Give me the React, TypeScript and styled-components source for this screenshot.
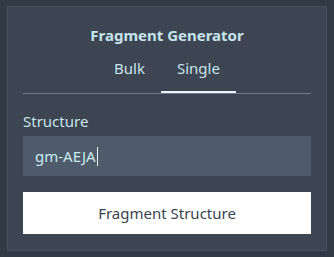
import React, { useEffect, useState } from "react";
import styled, { createGlobalStyle } from "styled-components";

const FONT = `"Noto Sans", "DejaVu Sans", sans-serif`;

const Global = createGlobalStyle`
  html, body { margin: 0; padding: 0; }
  body {
    background: #323a46;
    font-family: ${FONT};
    width: 334px;
    height: 257px;
    overflow: hidden;
  }
`;

const Page = styled.div`
  padding: 6px 7px;
  box-sizing: border-box;
  width: 334px;
  height: 257px;
`;

const Panel = styled.div`
  box-sizing: border-box;
  width: 320px;
  height: 245px;
  background: #3c4551;
  border: 1px solid #485160;
  padding: 0 15px;
  display: flex;
  flex-direction: column;
`;

const Title = styled.h2`
  margin: 17px 0 0;
  text-align: center;
  font-size: 15px;
  font-weight: 700;
  line-height: 22px;
  color: #c6e4ec;
`;

const Tabs = styled.div`
  margin-top: 11px;
  display: flex;
  justify-content: center;
  border-bottom: 1px solid #6b7a8f;
`;

const Tab = styled.button<{ $active?: boolean }>`
  background: none;
  border: none;
  margin: 0;
  padding: 0 16px 12px;
  font-family: inherit;
  font-size: 15px;
  line-height: 22px;
  color: #c6e4ec;
  cursor: pointer;
  border-bottom: 2px solid ${(p) => (p.$active ? "#eef2f6" : "transparent")};
`;

const Label = styled.label`
  display: block;
  margin-top: 17px;
  font-size: 15px;
  line-height: 20px;
  color: #c6e4ec;
`;

const Field = styled.div`
  position: relative;
  margin-top: 5px;
`;

const Input = styled.input`
  box-sizing: border-box;
  display: block;
  width: 100%;
  height: 40px;
  background: #4f5a6a;
  border: none;
  outline: none;
  padding: 0 12px;
  font-family: inherit;
  font-size: 15px;
  color: #c6ecf0;
  caret-color: transparent;
`;

const Caret = styled.span`
  position: absolute;
  top: 11px;
  width: 1px;
  height: 19px;
  background: #e8f4f6;
  pointer-events: none;
`;

const Button = styled.button`
  box-sizing: border-box;
  margin-top: 16px;
  width: 100%;
  height: 42px;
  background: #ffffff;
  border: none;
  font-family: inherit;
  font-size: 15px;
  color: #3a4350;
  cursor: pointer;
`;

function measure(text: string): number {
  if (typeof document === "undefined") return text.length * 9;
  const c = document.createElement("canvas");
  const ctx = c.getContext("2d");
  if (!ctx) return text.length * 9;
  ctx.font = `15px ${FONT}`;
  return ctx.measureText(text).width;
}

export default function App() {
  const [tab, setTab] = useState("single");
  const [value, setValue] = useState("gm-AEJA");
  const [caretX, setCaretX] = useState(12 + measure("gm-AEJA"));

  useEffect(() => {
    const update = () => setCaretX(12 + measure(value));
    update();
    if ((document as any).fonts?.ready) (document as any).fonts.ready.then(update);
  }, [value]);

  return (
    <>
      <Global />
      <Page>
        <Panel>
          <Title>Fragment Generator</Title>
          <Tabs>
            <Tab $active={tab === "bulk"} onClick={() => setTab("bulk")}>Bulk</Tab>
            <Tab $active={tab === "single"} onClick={() => setTab("single")}>Single</Tab>
          </Tabs>
          <Label htmlFor="structure">Structure</Label>
          <Field>
            <Input id="structure" value={value} onChange={(e) => setValue(e.target.value)} />
            <Caret style={{ left: Math.round(caretX) + 1 }} />
          </Field>
          <Button>Fragment Structure</Button>
        </Panel>
      </Page>
    </>
  );
}
